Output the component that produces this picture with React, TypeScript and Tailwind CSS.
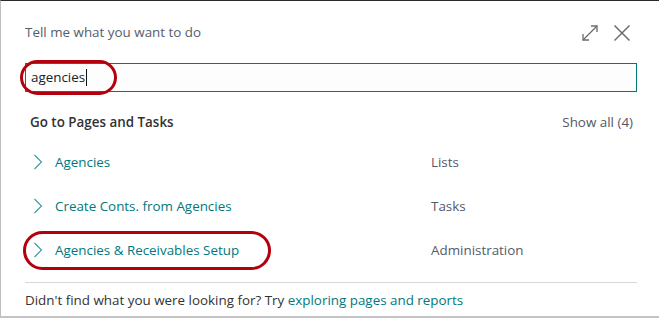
const ROWS = [
  { label: 'Agencies', group: 'Lists', marked: false },
  { label: 'Create Conts. from Agencies', group: 'Tasks', marked: false },
  { label: 'Agencies & Receivables Setup', group: 'Administration', marked: true },
]

function ExpandIcon() {
  return (
    <svg width="18" height="18" viewBox="0 0 18 18" fill="none" stroke="#6b6b6b" strokeWidth="1.3">
      <path d="M2 16 L16 2" />
      <path d="M10 2 H16 V8" />
      <path d="M2 10 V16 H8" />
    </svg>
  )
}

function CloseIcon() {
  return (
    <svg width="18" height="18" viewBox="0 0 18 18" fill="none" stroke="#6b6b6b" strokeWidth="1.5">
      <path d="M1.5 1.5 L16.5 16.5" />
      <path d="M16.5 1.5 L1.5 16.5" />
    </svg>
  )
}

function Chevron() {
  return (
    <svg width="10" height="16" viewBox="0 0 10 16" fill="none" stroke="#3b9fa1" strokeWidth="1.2">
      <path d="M1.5 1 L8.5 8 L1.5 15" />
    </svg>
  )
}

export default function App() {
  return (
    <div
      className="flex h-[318px] w-[659px] flex-col border-t border-l border-b-2 border-t-[#2b2b2b] border-l-[#bdbdbd] border-b-[#c4c4c4] bg-white text-[14px]"
      style={{ fontFamily: '"Open Sans", "Noto Sans", sans-serif' }}
    >
      <div className="flex h-[62px] items-start justify-between pl-[24px] pr-[28px] pt-[21px]">
        <span className="text-[13.4px] text-[#565d6a]">Tell me what you want to do</span>
        <div className="mt-[2px] flex items-center gap-[14px]">
          <ExpandIcon />
          <CloseIcon />
        </div>
      </div>

      <div className="relative mx-[24px] mr-[22px]">
        <div className="flex h-[29px] items-center border border-[#00777b] bg-[#fdfdfd] pl-[5px]">
          <span className="text-[13.4px] text-[#212121]">agencies</span>
          <span className="ml-px h-[17px] w-px bg-[#111]" />
        </div>
        <div className="pointer-events-none absolute -left-[5px] -top-[3px] h-[35px] w-[97px] rounded-full border-[3px] border-[#b4000d]" />
      </div>

      <div className="mt-[20px] flex items-center justify-between pl-[29px] pr-[26px]">
        <span className="text-[13.4px] font-semibold text-[#323232]">Go to Pages and Tasks</span>
        <span className="text-[13.4px] text-[#505868]">Show all (4)</span>
      </div>

      <div className="mt-[8px] flex flex-col">
        {ROWS.map((row) => (
          <div key={row.label} className="relative flex h-[44px] items-center pl-[32px]">
            <Chevron />
            <span className="ml-[12px] w-[376px] text-[13.4px] text-[#00797d]">{row.label}</span>
            <span className="text-[13.4px] text-[#545b69]">{row.group}</span>
            {row.marked && (
              <div className="pointer-events-none absolute left-[22px] top-[3px] h-[39px] w-[248px] rounded-full border-[3px] border-[#b4000d]" />
            )}
          </div>
        ))}
      </div>

      <div className="mx-[24px] mr-[22px] mt-[10px] border-t border-[#d6d6d6] pt-[6px]">
        <span className="text-[13.4px] text-[#333]">
          Didn't find what you were looking for? Try{' '}
          <span className="text-[#00797d]">exploring pages and reports</span>
        </span>
      </div>
    </div>
  )
}
